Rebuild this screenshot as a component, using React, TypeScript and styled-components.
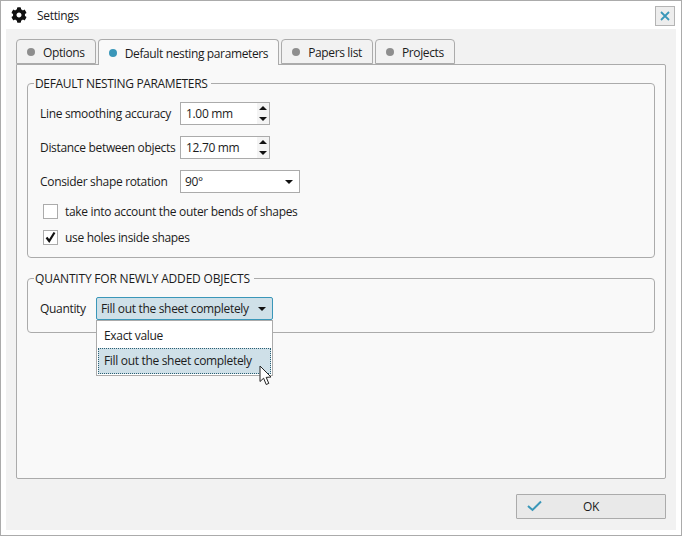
import styled, { createGlobalStyle } from "styled-components";
import { FaCog } from "react-icons/fa";

const GlobalStyle = createGlobalStyle`
  html, body {
    margin: 0;
    padding: 0;
    width: 682px;
    height: 536px;
    overflow: hidden;
  }
  body {
    font-family: "Open Sans", "Noto Sans", sans-serif;
    font-size: 12px;
    letter-spacing: -0.32px;
    color: #1c1c1c;
  }
`;

const Dialog = styled.div`
  box-sizing: border-box;
  width: 682px;
  height: 536px;
  display: flex;
  flex-direction: column;
  background: #fff;
  border: 1px solid #ababab;
  padding: 0 5px 5px;
`;

const TitleBar = styled.div`
  height: 28px;
  flex: none;
  display: flex;
  align-items: center;
  gap: 10px;
  padding-left: 5px;
  font-size: 12px;
  svg {
    flex: none;
    color: #111;
  }
`;

const Title = styled.span`
  flex: 1;
`;

const CloseButton = styled.div`
  box-sizing: border-box;
  width: 20px;
  height: 20px;
  margin-top: 2px;
  margin-right: 1px;
  display: flex;
  align-items: center;
  justify-content: center;
  background: #ededed;
  border: 1px solid #b4b4b4;
`;

const Content = styled.div`
  flex: 1;
  min-height: 0;
  display: flex;
  flex-direction: column;
  background: #f2f2f2;
  padding: 10px 10px 11px;
`;

const TabRow = styled.div`
  display: flex;
  gap: 2px;
  height: 26px;
  margin-bottom: -1px;
  position: relative;
  z-index: 1;
`;

const Tab = styled.div<{ $active?: boolean }>`
  box-sizing: border-box;
  height: ${(p) => (p.$active ? "26px" : "25px")};
  display: flex;
  align-items: center;
  gap: 8px;
  padding: 1px 10px 0;
  letter-spacing: -0.37px;
  background: ${(p) => (p.$active ? "#f9f9f9" : "#f2f2f2")};
  border: 1px solid #ababab;
  border-bottom: ${(p) => (p.$active ? "none" : "1px solid #ababab")};
  border-radius: 4px 4px 0 0;
`;

const Dot = styled.span<{ $active?: boolean }>`
  width: 8px;
  height: 8px;
  margin-top: -1px;
  border-radius: 50%;
  background: ${(p) => (p.$active ? "#3a97b9" : "#8e8e8e")};
`;

const Panel = styled.div`
  flex: 1;
  min-height: 0;
  background: #f9f9f9;
  border: 1px solid #ababab;
  border-radius: 0 2px 2px 2px;
  padding: 9px 10px 0;
`;

const Group = styled.fieldset`
  margin: 0 0 11px;
  padding: 10px 12px 12px;
  border: 1px solid #ababab;
  border-radius: 4px;
  display: flex;
  flex-direction: column;
  min-width: 0;
`;

const GroupTitle = styled.legend<{ $spacing: number }>`
  margin-left: -6px;
  padding: 2px 4px 0 1px;
  line-height: 16px;
  letter-spacing: ${(p) => p.$spacing}px;
`;

const Row = styled.div<{ $last?: boolean }>`
  display: flex;
  align-items: center;
  height: 23px;
  margin-bottom: ${(p) => (p.$last ? "0" : "11px")};
`;

const Label = styled.span<{ $width: number }>`
  width: ${(p) => p.$width}px;
  flex: none;
`;

const Spinner = styled.div`
  box-sizing: border-box;
  width: 90px;
  height: 23px;
  display: flex;
  align-items: center;
  justify-content: space-between;
  padding-left: 5px;
  background: #fff;
  border: 1px solid #ababab;
`;

const SpinArrows = styled.div`
  width: 12px;
  height: 21px;
  display: flex;
  flex-direction: column;
  align-items: center;
  justify-content: space-between;
  padding: 3px 0;
  box-sizing: border-box;
  background: #f4f4f4;
`;

const Select = styled.div<{ $width: number; $open?: boolean }>`
  box-sizing: border-box;
  width: ${(p) => p.$width}px;
  height: 23px;
  position: relative;
  display: flex;
  align-items: center;
  justify-content: space-between;
  padding: 0 6px 0 4px;
  background: ${(p) => (p.$open ? "#cfe0e8" : "#fff")};
  border: 1px solid ${(p) => (p.$open ? "#3a97b9" : "#ababab")};
  border-radius: ${(p) => (p.$open ? "2px" : "0")};
`;

const Popup = styled.div`
  box-sizing: border-box;
  position: absolute;
  top: 22px;
  left: -1px;
  width: 177px;
  height: 56px;
  padding: 1px;
  background: #fff;
  border: 1px solid #ababab;
  z-index: 2;
`;

const PopupItem = styled.div<{ $selected?: boolean }>`
  box-sizing: border-box;
  height: 26px;
  display: flex;
  align-items: center;
  padding-left: 5px;
  padding-bottom: ${(p) => (p.$selected ? "2px" : "0")};
  background: ${(p) => (p.$selected ? "#cfe0e8" : "transparent")};
  border: 1px ${(p) => (p.$selected ? "dotted #2b5f73" : "solid transparent")};
`;

const Cursor = styled.svg`
  position: absolute;
  left: 162px;
  top: 67px;
  z-index: 3;
`;

const CheckRow = styled.div<{ $gap: number }>`
  display: flex;
  align-items: center;
  gap: 7px;
  height: 14px;
  margin-left: 3px;
  margin-bottom: ${(p) => p.$gap}px;
`;

const CheckBox = styled.div`
  box-sizing: border-box;
  width: 15px;
  height: 15px;
  flex: none;
  display: flex;
  align-items: center;
  justify-content: center;
  background: #fff;
  border: 1px solid #ababab;
`;

const Footer = styled.div`
  display: flex;
  justify-content: flex-end;
  padding-top: 15px;
`;

const OkButton = styled.div`
  box-sizing: border-box;
  width: 150px;
  height: 25px;
  position: relative;
  display: flex;
  align-items: center;
  justify-content: center;
  background: #e9e9e9;
  border: 1px solid #ababab;
  border-radius: 1px;
  svg {
    position: absolute;
    left: 10px;
    top: 5px;
  }
`;

const Arrow = ({ up }: { up?: boolean }) => (
  <svg width="8" height="4" viewBox="0 0 8 4">
    <path d={up ? "M0 4L4 0L8 4Z" : "M0 0L8 0L4 4Z"} fill="#111" />
  </svg>
);

const tabs = ["Options", "Default nesting parameters", "Papers list", "Projects"];

export default function App() {
  return (
    <>
      <GlobalStyle />
      <Dialog>
        <TitleBar>
          <FaCog size={16} />
          <Title>Settings</Title>
          <CloseButton>
            <svg width="12" height="12" viewBox="0 0 12 12">
              <path d="M2 2L10 10M10 2L2 10" stroke="#3a97b9" strokeWidth="1.8" />
            </svg>
          </CloseButton>
        </TitleBar>
        <Content>
          <TabRow>
            {tabs.map((t, i) => (
              <Tab key={t} $active={i === 1}>
                <Dot $active={i === 1} />
                {t}
              </Tab>
            ))}
          </TabRow>
          <Panel>
            <Group>
              <GroupTitle $spacing={-0.35}>DEFAULT NESTING PARAMETERS</GroupTitle>
              <Row>
                <Label $width={140}>Line smoothing accuracy</Label>
                <Spinner>
                  1.00 mm
                  <SpinArrows>
                    <Arrow up />
                    <Arrow />
                  </SpinArrows>
                </Spinner>
              </Row>
              <Row>
                <Label $width={140}>Distance between objects</Label>
                <Spinner>
                  12.70 mm
                  <SpinArrows>
                    <Arrow up />
                    <Arrow />
                  </SpinArrows>
                </Spinner>
              </Row>
              <Row>
                <Label $width={140}>Consider shape rotation</Label>
                <Select $width={120}>
                  90°
                  <Arrow />
                </Select>
              </Row>
              <CheckRow $gap={12}>
                <CheckBox />
                take into account the outer bends of shapes
              </CheckRow>
              <CheckRow $gap={1}>
                <CheckBox>
                  <svg width="13" height="13" viewBox="0 0 13 13">
                    <path d="M2.5 6.5L5.2 10L10.5 1.5" fill="none" stroke="#111" strokeWidth="2.2" />
                  </svg>
                </CheckBox>
                use holes inside shapes
              </CheckRow>
            </Group>
            <Group>
              <GroupTitle $spacing={-0.2}>QUANTITY FOR NEWLY ADDED OBJECTS</GroupTitle>
              <Row $last>
                <Label $width={56}>Quantity</Label>
                <Select $width={177} $open>
                  Fill out the sheet completely
                  <Arrow />
                  <Popup>
                    <PopupItem>Exact value</PopupItem>
                    <PopupItem $selected>Fill out the sheet completely</PopupItem>
                  </Popup>
                  <Cursor width="14" height="21" viewBox="0 0 14 21">
                    <path
                      d="M1 1L1 16.5L4.6 13.2L7.2 19.5L9.8 18.4L7.2 12.4L12 12Z"
                      fill="#fff"
                      stroke="#222"
                      strokeWidth="1"
                      strokeLinejoin="round"
                    />
                  </Cursor>
                </Select>
              </Row>
            </Group>
          </Panel>
          <Footer>
            <OkButton>
              <svg width="15" height="12" viewBox="0 0 15 12">
                <path d="M1 6L5.5 10L14 1.5" fill="none" stroke="#3a97b9" strokeWidth="2" />
              </svg>
              OK
            </OkButton>
          </Footer>
        </Content>
      </Dialog>
    </>
  );
}
